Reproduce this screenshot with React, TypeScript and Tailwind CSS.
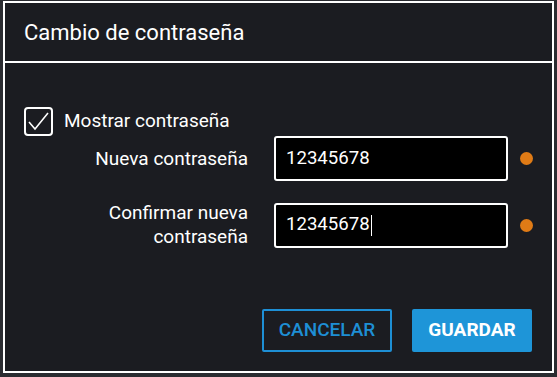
import React from 'react';

const FONT = { fontFamily: 'Roboto, "Noto Sans", Arial, sans-serif' };

function Field({ value, caret = false }: { value: string; caret?: boolean }) {
  return (
    <div className="flex h-[45px] w-[234px] items-center rounded-[3px] border-2 border-white bg-black px-[10px]">
      <span className="text-[18.6px] text-white">{value}</span>
      {caret && <span className="ml-px h-[21px] w-px bg-white" />}
    </div>
  );
}

export default function App() {
  return (
    <div className="h-[377px] w-[557px] bg-[#2b2c31] pl-[3px] pt-px" style={FONT}>
      <div className="flex h-[372px] w-[551px] flex-col border-2 border-white bg-[#1b1c21]">
        {/* Header */}
        <div className="flex h-[60px] items-center border-b-2 border-white px-[19px]">
          <h2 className="text-[22px] text-white">Cambio de contraseña</h2>
        </div>

        {/* Body */}
        <div className="flex flex-1 flex-col px-[19px] pt-[44px]">
          <label className="flex items-center gap-[11px]">
            <span className="flex h-[29px] w-[29px] items-center justify-center rounded-[4px] border-2 border-white">
              <svg width="23" height="21" viewBox="0 0 23 21" fill="none">
                <polyline points="2,11 8,18 21,2" stroke="white" strokeWidth="1.6" />
              </svg>
            </span>
            <span className="text-[19px] text-white">Mostrar contraseña</span>
          </label>

          <div className="grid grid-cols-[224px_234px_13px] items-center gap-x-0 gap-y-[20px]">
            <span className="text-right text-[19px] leading-6 text-white">Nueva contraseña</span>
            <div className="ml-[26px] w-[234px]">
              <Field value="12345678" />
            </div>
            <span className="ml-[38px] h-[13px] w-[13px] rounded-full bg-[#e07b16]" />

            <span className="text-right text-[19px] leading-6 text-white">
              Confirmar nueva
              <br />
              contraseña
            </span>
            <div className="ml-[26px] w-[234px]">
              <Field value="12345678" caret />
            </div>
            <span className="ml-[38px] h-[13px] w-[13px] rounded-full bg-[#e07b16]" />
          </div>

          <div className="mt-auto mb-[19px] flex justify-end gap-[20px] pr-px">
            <button className="h-[43px] w-[130px] rounded-[2px] border-2 border-[#1e8fd5] text-[19px] font-medium text-[#1e8fd5]">
              CANCELAR
            </button>
            <button className="h-[43px] w-[120px] rounded-[2px] bg-[#1e95d8] text-[19px] font-bold text-white">
              GUARDAR
            </button>
          </div>
        </div>
      </div>
    </div>
  );
}
